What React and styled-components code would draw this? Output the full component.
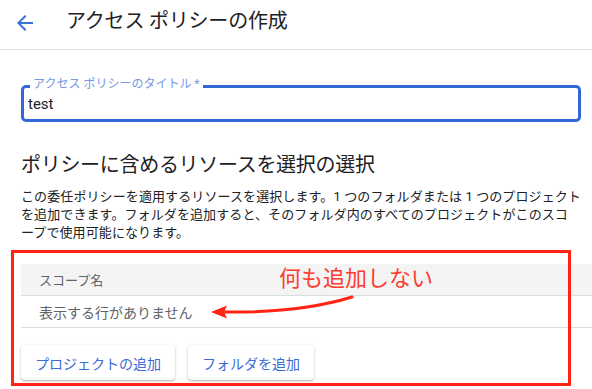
import React from 'react';
import styled, { createGlobalStyle } from 'styled-components';

const Global = createGlobalStyle`
  html, body { margin: 0; padding: 0; background: #fff; }
  body {
    font-family: Roboto, "Noto Sans CJK JP", "Noto Sans", sans-serif;
    color: #202124;
    text-spacing-trim: space-all;
  }
`;

const Page = styled.div`
  position: relative;
  width: 592px;
  height: 389px;
  overflow: hidden;
`;

const Header = styled.header`
  display: flex;
  align-items: flex-start;
  box-sizing: border-box;
  height: 50px;
  padding: 7px 0 0 13px;
  border-bottom: 1px solid #e0e0e0;
`;

const BackIcon = styled.svg`
  width: 24px;
  height: 24px;
  margin-top: 4px;
  fill: #3b6fdc;
  flex: none;
`;

const Title = styled.h1`
  margin: 0 0 0 29px;
  font-size: 20px;
  line-height: 28px;
  font-weight: 400;
  letter-spacing: -0.2px;
  color: #202124;
`;

const Main = styled.main`
  padding: 0 11px 0 21px;
`;

const Field = styled.div`
  position: relative;
  display: flex;
  align-items: center;
  box-sizing: border-box;
  height: 37px;
  margin-top: 35px;
  padding-left: 4px;
  border: 3px solid #3367d6;
  border-radius: 5px;
`;

const FloatLabel = styled.span`
  position: absolute;
  top: -11px;
  left: 6px;
  padding: 0 3px;
  background: #fff;
  font-size: 12px;
  line-height: 14px;
  color: #7898e4;
`;

const FieldValue = styled.span`
  font-size: 15px;
  line-height: 18px;
  color: #202124;
`;

const Heading = styled.h2`
  margin: 29px 0 0;
  font-size: 20px;
  line-height: 28px;
  font-weight: 400;
  letter-spacing: -0.3px;
  color: #202124;
`;

const Desc = styled.p`
  margin: 9px 0 0;
  font-size: 13px;
  line-height: 18px;
  letter-spacing: 0.1px;
  color: #202124;
`;

const Table = styled.div`
  margin: 22px -11px 0 0;
`;

const Row = styled.div`
  display: flex;
  align-items: center;
  box-sizing: border-box;
  height: 32px;
  padding-left: 18px;
  border-bottom: 1px solid #dcdcdc;
  background: ${p => (p.$head ? '#f4f4f4' : '#fff')};
  font-size: ${p => (p.$head ? '13px' : '14px')};
  color: #5f6368;
`;

const Actions = styled.div`
  display: flex;
  gap: 13px;
  margin-top: 17px;
`;

const Button = styled.button`
  height: 35px;
  padding: 0 14px;
  border: none;
  border-radius: 4px;
  background: #fff;
  font-family: inherit;
  font-size: 14px;
  color: #3b6bd6;
  box-shadow: 0 1px 3px rgba(0, 0, 0, 0.22), 0 1px 1px rgba(0, 0, 0, 0.12);
  cursor: pointer;
`;

const RedFrame = styled.div`
  position: absolute;
  left: 11px;
  top: 250px;
  width: 560px;
  height: 136px;
  box-sizing: border-box;
  border: 3px solid #ff2414;
  pointer-events: none;
`;

const Note = styled.div`
  position: absolute;
  left: 279px;
  top: 266px;
  font-size: 22px;
  line-height: 26px;
  color: #ff3b30;
`;

const ArrowLayer = styled.svg`
  position: absolute;
  left: 0;
  top: 0;
  width: 592px;
  height: 389px;
  pointer-events: none;
`;

export default function App() {
  return (
    <Page>
      <Global />
      <Header>
        <BackIcon viewBox="0 0 24 24">
          <path d="M20 11H7.83l5.59-5.59L12 4l-8 8 8 8 1.41-1.41L7.83 13H20v-2z" />
        </BackIcon>
        <Title>アクセス ポリシーの作成</Title>
      </Header>
      <Main>
        <Field>
          <FloatLabel>アクセス ポリシーのタイトル *</FloatLabel>
          <FieldValue>test</FieldValue>
        </Field>
        <Heading>ポリシーに含めるリソースを選択の選択</Heading>
        <Desc>
          この委任ポリシーを適用するリソースを選択します。1 つのフォルダまたは 1 つのプロジェクトを追加できます。フォルダを追加すると、そのフォルダ内のすべてのプロジェクトがこのスコ
          <br />
          ープで使用可能になります。
        </Desc>
        <Table>
          <Row $head>スコープ名</Row>
          <Row>表示する行がありません</Row>
        </Table>
        <Actions>
          <Button>プロジェクトの追加</Button>
          <Button>フォルダを追加</Button>
        </Actions>
      </Main>
      <RedFrame />
      <Note>何も追加しない</Note>
      <ArrowLayer viewBox="0 0 592 389">
        <path d="M352 297 Q300 313 224 312" stroke="#ff2414" strokeWidth="3" fill="none" strokeLinecap="round" />
        <polygon points="211,312 227,305.5 224,312 227,318.5" fill="#ff2414" />
      </ArrowLayer>
    </Page>
  );
}
